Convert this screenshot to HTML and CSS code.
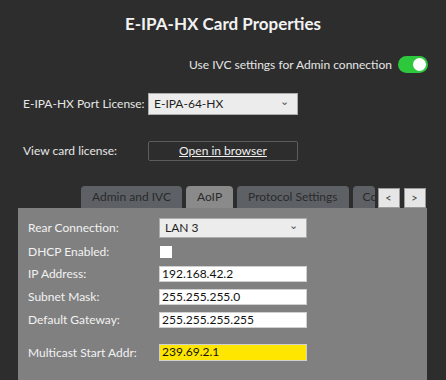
FILE: index.html
```html
<!DOCTYPE html>
<html lang="en">
<head>
    <meta charset="UTF-8">
    <title>E-IPA-HX Card Properties</title>
    <link rel="stylesheet" href="styles.css">
</head>
<body>
    <div class="dialog">
        <div class="dialog-title">E-IPA-HX Card Properties</div>

        <div class="toggle-row">
            <span>Use IVC settings for Admin connection</span>
            <span class="toggle"><span class="knob"></span></span>
        </div>

        <div class="top-row license-row">
            <div class="top-label">E-IPA-HX Port License:</div>
            <div class="select dark-select">
                <span>E-IPA-64-HX</span>
                <span class="chevron">&#8964;</span>
            </div>
        </div>

        <div class="top-row view-row">
            <div class="top-label">View card license:</div>
            <div class="link-btn">Open in browser</div>
        </div>

        <div class="tab-bar">
            <div class="tab">Admin and IVC</div>
            <div class="tab active">AoIP</div>
            <div class="tab">Protocol Settings</div>
            <div class="tab cut">Co</div>
            <div class="scroll-btns">
                <div class="scroll-btn">&lt;</div>
                <div class="scroll-btn">&gt;</div>
            </div>
        </div>

        <div class="panel">
            <div class="field-row select-row">
                <div class="field-label">Rear Connection:</div>
                <div class="select panel-select">
                    <span>LAN 3</span>
                    <span class="chevron">&#8964;</span>
                </div>
            </div>
            <div class="field-row check-row">
                <div class="field-label">DHCP Enabled:</div>
                <div class="checkbox"></div>
            </div>
            <div class="field-row">
                <div class="field-label">IP Address:</div>
                <div class="text-input">192.168.42.2</div>
            </div>
            <div class="field-row">
                <div class="field-label">Subnet Mask:</div>
                <div class="text-input">255.255.255.0</div>
            </div>
            <div class="field-row">
                <div class="field-label">Default Gateway:</div>
                <div class="text-input">255.255.255.255</div>
            </div>
            <div class="field-row multicast-row">
                <div class="field-label">Multicast Start Addr:</div>
                <div class="text-input highlight">239.69.2.1</div>
            </div>
        </div>
    </div>
</body>
</html>
```

FILE: styles.css
```css
body {
    margin: 0;
    background-color: #2d2d2d;
    font-family: Lato, 'Open Sans', Arial, sans-serif;
    font-size: 12px;
    line-height: 16px;
    color: #e6e6e6;
    overflow: hidden;
}

.dialog {
    width: 446px;
    height: 380px;
}

.dialog-title {
    text-align: center;
    font-size: 17px;
    font-weight: bold;
    color: #f2f2f2;
    padding-top: 14px;
    height: 20px;
    line-height: 20px;
}

.toggle-row {
    display: flex;
    justify-content: flex-end;
    align-items: center;
    gap: 6px;
    padding-right: 18px;
    margin-top: 22px;
    height: 17px;
}

.toggle {
    width: 30px;
    height: 17px;
    border-radius: 9px;
    background-color: #2ec83c;
    position: relative;
}

.knob {
    position: absolute;
    right: 2px;
    top: 2px;
    width: 13px;
    height: 13px;
    border-radius: 50%;
    background-color: #ffffff;
}

.top-row {
    display: flex;
    align-items: center;
    padding-left: 23px;
}

.license-row {
    margin-top: 20px;
}

.view-row {
    margin-top: 26px;
}

.top-label {
    width: 125px;
    white-space: nowrap;
}

.select {
    display: flex;
    justify-content: space-between;
    align-items: center;
    box-sizing: border-box;
    background-color: #ececec;
    border: 1px solid #acacac;
    color: #1e1e1e;
    padding: 0 8px 0 5px;
}

.dark-select {
    width: 150px;
    height: 22px;
}

.chevron {
    font-size: 11px;
    color: #555;
    margin-top: -6px;
}

.link-btn {
    width: 150px;
    height: 20px;
    box-sizing: border-box;
    border: 1px solid #5c5c5c;
    border-radius: 2px;
    text-align: center;
    line-height: 17px;
    text-decoration: underline;
    color: #f0f0f0;
}

.tab-bar {
    display: flex;
    align-items: flex-end;
    gap: 4px;
    margin-top: 25px;
    padding-left: 81px;
    height: 22px;
}

.tab {
    height: 22px;
    box-sizing: border-box;
    background-color: #5d6166;
    color: #2a2a2a;
    border-radius: 4px 4px 0 0;
    padding: 0 11px;
    line-height: 22px;
    white-space: nowrap;
}

.tab.active {
    background-color: #8a8a8a;
}

.tab.cut {
    width: 22px;
    padding: 0 0 0 10px;
    overflow: hidden;
}

.scroll-btns {
    display: flex;
    gap: 4px;
    align-self: flex-start;
    margin-top: 2px;
    margin-left: -1px;
}

.scroll-btn {
    width: 22px;
    height: 20px;
    box-sizing: border-box;
    background-color: #e6e6e6;
    border: 1px solid #9a9a9a;
    color: #444;
    text-align: center;
    line-height: 17px;
    font-size: 11px;
}

.panel {
    background-color: #808080;
    margin: 0 19px 0 18px;
    height: 173px;
    padding-top: 10px;
    box-sizing: border-box;
}

.field-row {
    display: flex;
    align-items: center;
    padding-left: 10px;
    margin-bottom: 7px;
}

.select-row,
.check-row {
    margin-bottom: 8px;
}

.field-label {
    width: 131px;
    color: #f2f2f2;
}

.panel-select {
    width: 148px;
    height: 20px;
}

.check-row {
    height: 12px;
}

.checkbox {
    width: 12px;
    height: 12px;
    background-color: #ffffff;
    margin-left: 1px;
}

.text-input {
    width: 148px;
    height: 16px;
    box-sizing: border-box;
    background-color: #ffffff;
    border: 1px solid #d0d0d0;
    color: #111;
    padding-left: 2px;
    line-height: 14px;
}

.multicast-row {
    margin-top: 16px;
}

.text-input.highlight {
    height: 17px;
    background-color: #ffe600;
}
```
